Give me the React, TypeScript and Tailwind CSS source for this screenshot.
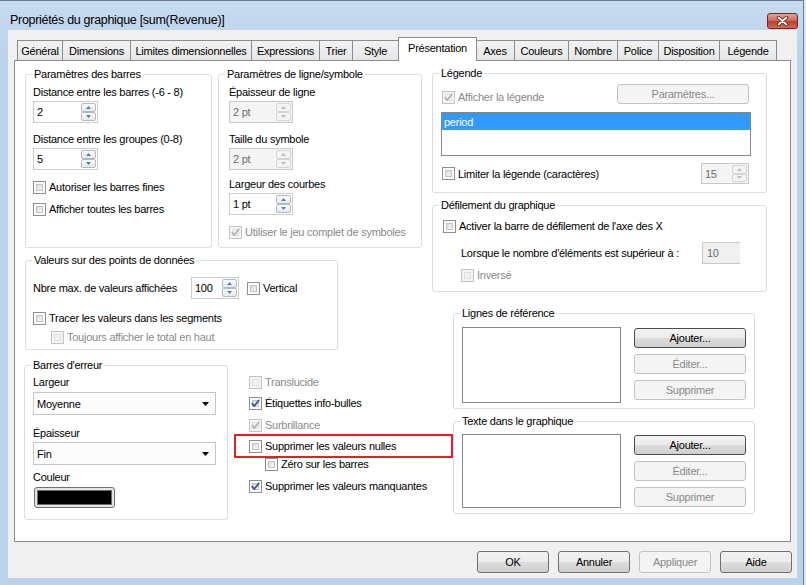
import React from 'react';

type CheckProps = { checked?: boolean; disabled?: boolean };

function CheckBox({ checked = false, disabled = false }: CheckProps) {
  return (
    <span
      className={`relative flex w-[13px] h-[13px] shrink-0 border ${
        disabled ? 'border-[#c4c4c4] bg-[#f4f4f4]' : 'border-[#8e8f8f] bg-white'
      }`}
    >
      <span
        className={`absolute inset-[2px] ${
          disabled
            ? 'bg-[#f2f2f2] border border-[#e0e0e0]'
            : 'bg-[linear-gradient(135deg,#dadada,#f8f8f8)] border border-[#c0c3c7]'
        }`}
      />
      {checked && (
        <svg className="absolute left-0 top-0" width="11" height="11" viewBox="0 0 11 11">
          <path
            d="M2.2 5.6 L4.3 8 L8.8 2.4"
            fill="none"
            stroke={disabled ? '#b4b4b4' : '#3b5494'}
            strokeWidth="1.7"
            strokeLinecap="round"
            strokeLinejoin="round"
          />
        </svg>
      )}
    </span>
  );
}

function CheckRow({
  label,
  checked = false,
  disabled = false,
  className = '',
}: CheckProps & { label: string; className?: string }) {
  return (
    <div className={`flex items-center gap-[3px] h-[14px] ${className}`}>
      <CheckBox checked={checked} disabled={disabled} />
      <span className={`whitespace-nowrap ${disabled ? 'text-[#8a8a8a]' : ''}`}>{label}</span>
    </div>
  );
}

function SpinArrow({ up = false, disabled = false }: { up?: boolean; disabled?: boolean }) {
  return (
    <div
      className={`flex-1 flex items-center justify-center rounded-[2px] border ${
        disabled
          ? 'border-[#d2d5d9] bg-[#f4f4f4]'
          : 'border-[#b3b9c1] bg-[linear-gradient(#fbfcfd,#e3e9ef)]'
      }`}
    >
      <svg width="5" height="3" viewBox="0 0 5 3">
        <path
          d={up ? 'M0 3 L2.5 0 L5 3 Z' : 'M0 0 L2.5 3 L5 0 Z'}
          fill={disabled ? '#bcbcbc' : '#5b7cb3'}
        />
      </svg>
    </div>
  );
}

function Spin({
  value,
  width,
  disabled = false,
  tall = true,
}: {
  value: string;
  width: string;
  disabled?: boolean;
  tall?: boolean;
}) {
  return (
    <div
      className={`flex ${width} ${tall ? 'h-[22px]' : 'h-[21px]'} border ${
        disabled ? 'border-[#c5c8cc] bg-[#f4f4f4] text-[#6d6d6d]' : 'border-[#c9ccd1] bg-white'
      }`}
    >
      <div className="flex-1 flex items-center pl-[3px]">{value}</div>
      <div className="flex flex-col w-[16px] py-[1px] pr-[1px]">
        <SpinArrow up disabled={disabled} />
        <SpinArrow disabled={disabled} />
      </div>
    </div>
  );
}

function Btn({
  children,
  disabled = false,
  strong = false,
  className = '',
}: {
  children: React.ReactNode;
  disabled?: boolean;
  strong?: boolean;
  className?: string;
}) {
  return (
    <div
      className={`flex items-center justify-center rounded-[3px] border whitespace-nowrap ${
        disabled
          ? 'border-[#bfc3c7] bg-[#f4f4f4] text-[#8a8a8a]'
          : `${strong ? 'border-[#4d4d4d]' : 'border-[#707070]'} bg-[linear-gradient(#f2f2f2,#ebebeb_50%,#dddddd_50%,#cfcfcf)]`
      } ${className}`}
    >
      {children}
    </div>
  );
}

function Group({
  title,
  className,
  children,
}: {
  title: string;
  className: string;
  children?: React.ReactNode;
}) {
  return (
    <div className={`relative shrink-0 border border-[#d5dfe5] rounded-[3px] ${className}`}>
      <span className="absolute left-[6px] top-[-8px] bg-white px-[2px] whitespace-nowrap">{title}</span>
      {children}
    </div>
  );
}

function Select({ value }: { value: string }) {
  return (
    <div className="flex items-center justify-between w-[183px] h-[23px] border border-[#c6c6c6] bg-[#fcfcfc] pl-[3px] pr-[6px]">
      <span>{value}</span>
      <svg width="7" height="4" viewBox="0 0 7 4">
        <path d="M0 0 L3.5 4 L7 0 Z" fill="#000" />
      </svg>
    </div>
  );
}

function ListBox({ className }: { className: string }) {
  return <div className={`border border-[#828790] bg-white ${className}`} />;
}

const tabs: { name: string; w: string }[] = [
  { name: 'Général', w: 'w-[46px]' },
  { name: 'Dimensions', w: 'w-[69px]' },
  { name: 'Limites dimensionnelles', w: 'w-[122px]' },
  { name: 'Expressions', w: 'w-[69px]' },
  { name: 'Trier', w: 'w-[34px]' },
  { name: 'Style', w: 'w-[47px]' },
  { name: 'Présentation', w: 'w-[79px]' },
  { name: 'Axes', w: 'w-[40px]' },
  { name: 'Couleurs', w: 'w-[55px]' },
  { name: 'Nombre', w: 'w-[50px]' },
  { name: 'Police', w: 'w-[42px]' },
  { name: 'Disposition', w: 'w-[62px]' },
  { name: 'Légende', w: 'w-[58px]' },
];

export default function App() {
  return (
    <div className="w-[806px] h-[585px] overflow-hidden bg-[#dde8f4] font-['Liberation_Sans',Arial,sans-serif] text-[11px] leading-[14px] tracking-[-0.25px] text-black">
      <div className="w-[804px] h-[585px] flex flex-col border-t border-r border-[#6b7c90] bg-[linear-gradient(#c7dbf0,#bad2ea_60px,#bad2ea)]">
        {/* title bar */}
        <div className="h-[29px] flex items-start justify-between pl-[10px] pr-[5px]">
          <span className="mt-[12px] text-[12.5px] tracking-[-0.3px]">Propriétés du graphique [sum(Revenue)]</span>
          <div className="mt-[12px] w-[31px] h-[16px] rounded-[3px] border border-[#6d2b22] bg-[linear-gradient(#e3a496,#cf6d5b_45%,#be3d28_55%,#d46a52)] flex items-center justify-center">
            <svg width="13" height="10" viewBox="0 0 13 10">
              <path d="M2.5 1.5 L10.5 8.5 M10.5 1.5 L2.5 8.5" stroke="#4a1c16" strokeWidth="3.4" strokeLinecap="round" />
              <path d="M2.5 1.5 L10.5 8.5 M10.5 1.5 L2.5 8.5" stroke="#ffffff" strokeWidth="1.8" strokeLinecap="round" />
            </svg>
          </div>
        </div>

        {/* client area */}
        <div className="ml-[8px] w-[789px] h-[548px] bg-[#f0f0f0] flex flex-col pl-[6px] pt-[7px]">
          {/* tabs */}
          <div className="flex items-end h-[23px] pl-[3px]">
            {tabs.map((t, i) => {
              const active = t.name === 'Présentation';
              return (
                <div
                  key={t.name}
                  className={`${t.w} flex justify-center border-l border-t border-r border-[#898c95] whitespace-nowrap ${
                    i > 0 ? '-ml-px' : ''
                  } ${
                    active
                      ? 'relative z-10 h-[24px] mb-[-1px] bg-white pt-[3px] -mx-[1px]'
                      : 'h-[20px] pt-[3px] bg-[linear-gradient(#f3f3f3,#e6e6e6)]'
                  }`}
                >
                  {t.name}
                </div>
              );
            })}
          </div>

          {/* tab page */}
          <div className="w-[777px] h-[482px] border border-[#898c95] bg-white flex pt-[13px] pl-[10px]">
            {/* left side */}
            <div className="w-[397px] flex flex-col">
              <div className="flex gap-[6px]">
                <Group title="Paramètres des barres" className="w-[187px] h-[174px] pt-[10px] pl-[7px]">
                  <div>Distance entre les barres (-6 - 8)</div>
                  <div className="mt-[2px]">
                    <Spin value="2" width="w-[65px]" />
                  </div>
                  <div className="mt-[9px]">Distance entre les groupes (0-8)</div>
                  <div className="mt-[2px]">
                    <Spin value="5" width="w-[65px]" />
                  </div>
                  <CheckRow label="Autoriser les barres fines" className="mt-[10px]" />
                  <CheckRow label="Afficher toutes les barres" className="mt-[8px]" />
                </Group>

                <Group title="Paramètres de ligne/symbole" className="w-[204px] h-[174px] pt-[10px] pl-[10px]">
                  <div>Épaisseur de ligne</div>
                  <div className="mt-[2px]">
                    <Spin value="2 pt" width="w-[64px]" disabled />
                  </div>
                  <div className="mt-[9px]">Taille du symbole</div>
                  <div className="mt-[2px]">
                    <Spin value="2 pt" width="w-[64px]" disabled />
                  </div>
                  <div className="mt-[7px]">Largeur des courbes</div>
                  <div className="mt-[2px]">
                    <Spin value="1 pt" width="w-[64px]" />
                  </div>
                  <CheckRow label="Utiliser le jeu complet de symboles" checked disabled className="mt-[10px]" />
                </Group>
              </div>

              <Group title="Valeurs sur des points de données" className="mt-[12px] w-[313px] h-[90px] pt-[16px] pl-[7px]">
                <div className="flex items-center h-[22px]">
                  <span className="w-[158px]">Nbre max. de valeurs affichées</span>
                  <Spin value="100" width="w-[48px]" />
                  <CheckRow label="Vertical" className="ml-[8px]" />
                </div>
                <CheckRow label="Tracer les valeurs dans les segments" className="mt-[12px]" />
                <CheckRow label="Toujours afficher le total en haut" disabled className="mt-[5px] ml-[18px]" />
              </Group>

              <div className="mt-[15px] flex">
                <Group title="Barres d'erreur" className="-ml-px w-[204px] h-[155px] pt-[9px] pl-[8px]">
                  <div>Largeur</div>
                  <div className="mt-[3px]">
                    <Select value="Moyenne" />
                  </div>
                  <div className="mt-[11px]">Épaisseur</div>
                  <div className="mt-[2px]">
                    <Select value="Fin" />
                  </div>
                  <div className="mt-[5px]">Couleur</div>
                  <div className="mt-[3px] ml-[1px] w-[81px] h-[21px] rounded-[3px] border border-[#707070] bg-[#e4e4e4] p-[2px]">
                    <div className="w-full h-full bg-black border border-[#6a6a6a]" />
                  </div>
                </Group>

                <div className="relative ml-[21px] pt-[10px]">
                  <CheckRow label="Translucide" disabled />
                  <CheckRow label="Étiquettes info-bulles" checked className="mt-[7px]" />
                  <CheckRow label="Surbrillance" checked disabled className="mt-[8px]" />
                  <CheckRow label="Supprimer les valeurs nulles" className="mt-[7px]" />
                  <CheckRow label="Zéro sur les barres" className="mt-[4px] ml-[16px]" />
                  <CheckRow label="Supprimer les valeurs manquantes" checked className="mt-[8px]" />
                  {/* annotation */}
                  <div className="absolute left-[-15px] top-[69px] w-[219px] h-[24px] border-2 border-[#e3202a]" />
                </div>
              </div>
            </div>

            {/* right side */}
            <div className="ml-[10px] -mt-px w-[335px] flex flex-col">
              <Group title="Légende" className="w-[335px] h-[120px] pt-[10px] pl-[8px] pr-[17px]">
                <div className="flex items-start justify-between">
                  <CheckRow label="Afficher la légende" checked disabled className="mt-[6px] ml-px" />
                  <Btn disabled className="w-[132px] h-[20px]">
                    Paramètres...
                  </Btn>
                </div>
                <div className="mt-[8px] w-[310px] h-[44px] border border-[#828790] bg-white">
                  <div className="h-[17px] bg-[#3399ff] text-white pl-[2px] flex items-center">period</div>
                </div>
                <div className="mt-[7px] flex items-center justify-between">
                  <CheckRow label="Limiter la légende (caractères)" className="ml-px" />
                  <Spin value="15" width="w-[48px]" disabled tall={false} />
                </div>
              </Group>

              <Group title="Défilement du graphique" className="mt-[12px] w-[335px] h-[87px] pt-[13px] pl-[10px]">
                <CheckRow label="Activer la barre de défilement de l'axe des X" />
                <div className="mt-[9px] ml-[18px] flex items-center h-[22px]">
                  <span className="w-[241px]">Lorsque le nombre d'éléments est supérieur à :</span>
                  <div className="w-[38px] h-[22px] border-l border-t border-b border-[#c5c8cc] bg-[#f0f0f0] text-[#6d6d6d] pl-[4px] pt-[3px]">
                    10
                  </div>
                </div>
                <CheckRow label="Inversé" disabled className="mt-[4px] ml-[18px]" />
              </Group>

              <Group title="Lignes de référence" className="mt-[21px] ml-[21px] w-[302px] h-[96px] pt-[13px] pl-[8px] flex">
                <ListBox className="w-[159px] h-[76px]" />
                <div className="ml-[13px] mt-px flex flex-col gap-[6px]">
                  <Btn strong className="w-[112px] h-[20px]">
                    Ajouter...
                  </Btn>
                  <Btn disabled className="w-[112px] h-[20px]">
                    Éditer...
                  </Btn>
                  <Btn disabled className="w-[112px] h-[20px]">
                    Supprimer
                  </Btn>
                </div>
              </Group>

              <Group title="Texte dans le graphique" className="mt-[12px] ml-[21px] w-[302px] h-[93px] pt-[12px] pl-[8px] flex">
                <ListBox className="w-[159px] h-[74px]" />
                <div className="ml-[13px] mt-px flex flex-col gap-[6px]">
                  <Btn strong className="w-[112px] h-[20px]">
                    Ajouter...
                  </Btn>
                  <Btn disabled className="w-[112px] h-[20px]">
                    Éditer...
                  </Btn>
                  <Btn disabled className="w-[112px] h-[20px]">
                    Supprimer
                  </Btn>
                </div>
              </Group>
            </div>
          </div>

          {/* dialog buttons */}
          <div className="mt-[9px] flex justify-end gap-[9px] pr-[5px]">
            <Btn className="w-[72px] h-[22px]">OK</Btn>
            <Btn className="w-[72px] h-[22px]">Annuler</Btn>
            <Btn disabled className="w-[72px] h-[22px]">
              Appliquer
            </Btn>
            <Btn className="w-[72px] h-[22px]">Aide</Btn>
          </div>
        </div>
      </div>
    </div>
  );
}
